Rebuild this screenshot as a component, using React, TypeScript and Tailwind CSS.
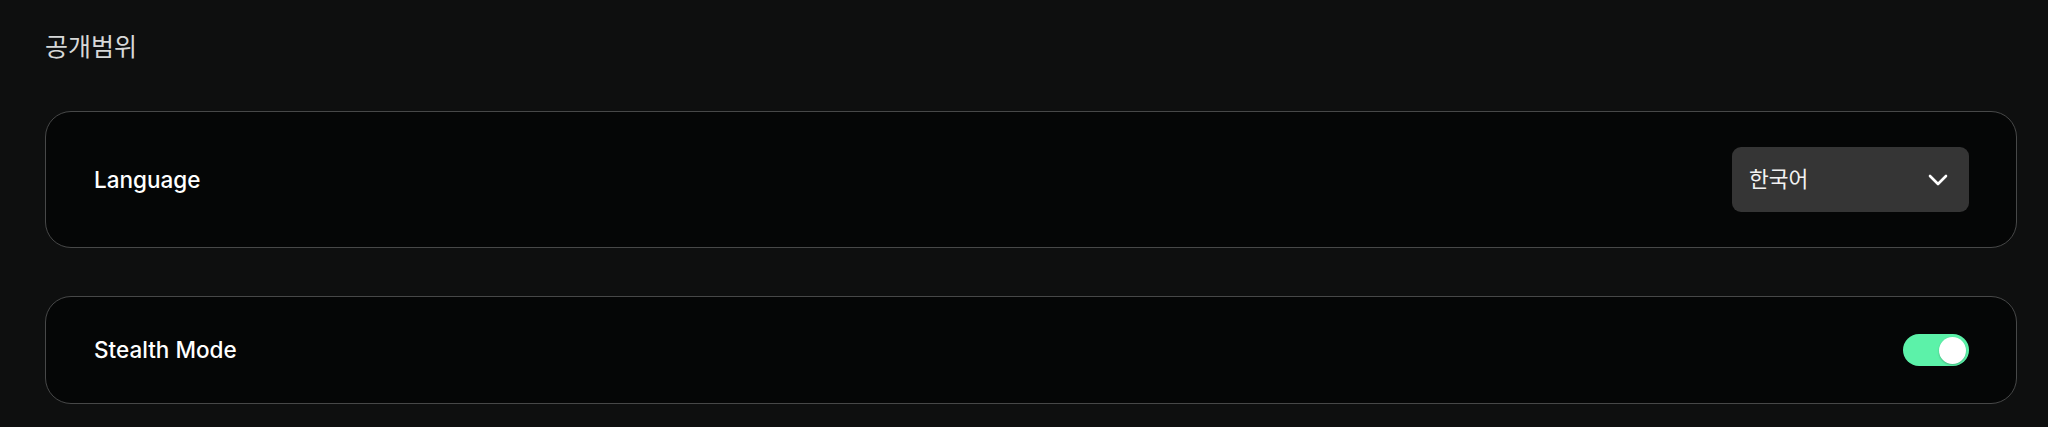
import React, { useState } from 'react';

const FONT = "font-['Inter','Noto_Sans_CJK_KR',sans-serif]";

const Chevron: React.FC = () => (
  <svg width="20" height="12" viewBox="0 0 20 12" fill="none">
    <path d="M2 2l8 8 8-8" stroke="#ffffff" strokeWidth="2.6" strokeLinecap="round" strokeLinejoin="round" />
  </svg>
);

const Toggle: React.FC<{ on: boolean; onChange: () => void }> = ({ on, onChange }) => (
  <button
    onClick={onChange}
    className={`w-[66px] h-[32px] rounded-full flex items-center px-[3px] ${on ? 'bg-[#5cf2a9] justify-end' : 'bg-[#3a3a3a] justify-start'}`}
  >
    <span className="w-[27px] h-[27px] rounded-full bg-white shadow-[0_1px_2px_rgba(0,0,0,0.25)]"></span>
  </button>
);

export default function App() {
  const [stealth, setStealth] = useState(true);

  return (
    <div className={`min-h-screen bg-[#0e0f0f] pl-[45px] pr-[31px] pt-[30px] pb-[24px] ${FONT}`}>
      {/* Section title */}
      <h2 className="text-[25px] leading-[34px] text-[#d6d8d8] font-normal">공개범위</h2>

      <div className="mt-[47px] flex flex-col gap-[48px]">
        {/* Language */}
        <div className="bg-[#050606] border border-[#474848] rounded-[26px] pl-[48px] pr-[47px] py-[35px] flex items-center justify-between">
          <span className="text-[22.5px] font-medium text-white">Language</span>
          <div className="w-[237px] h-[65px] bg-[#353535] rounded-[9px] flex items-center justify-between pl-[17px] pr-[21px]">
            <span className="text-[21.5px] text-[#f2f2f2]">한국어</span>
            <Chevron />
          </div>
        </div>

        {/* Stealth Mode */}
        <div className="bg-[#050606] border border-[#474848] rounded-[26px] pl-[48px] pr-[47px] py-[36px] flex items-center justify-between">
          <span className="text-[22.5px] leading-[34px] font-medium text-white">Stealth Mode</span>
          <Toggle on={stealth} onChange={() => setStealth(!stealth)} />
        </div>
      </div>
    </div>
  );
}
